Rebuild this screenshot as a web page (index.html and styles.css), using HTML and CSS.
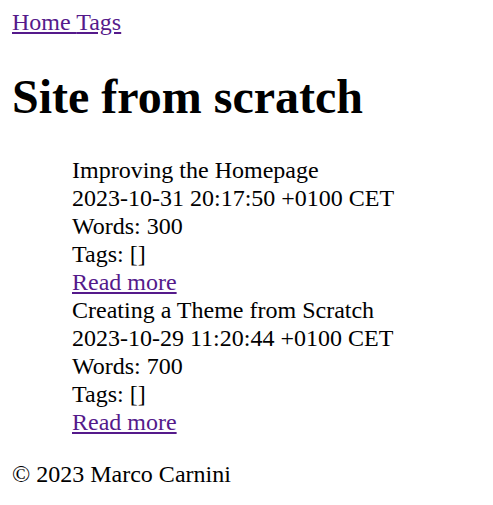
FILE: index.html
```html
<!DOCTYPE html>
<html lang="en">
<head>
<meta charset="utf-8">
<title>Site from scratch</title>
<link rel="stylesheet" href="styles.css">
</head>
<body>
<nav class="nav"><a href="#">Home </a><a href="#">Tags</a></nav>
<h1 class="title">Site from scratch</h1>
<ul class="posts">
  <li class="post">
    <div>Improving the Homepage</div>
    <div>2023-10-31 20:17:50 +0100 CET</div>
    <div>Words: 300</div>
    <div>Tags: []</div>
    <a href="#">Read more</a>
  </li>
  <li class="post">
    <div>Creating a Theme from Scratch</div>
    <div>2023-10-29 11:20:44 +0100 CET</div>
    <div>Words: 700</div>
    <div>Tags: []</div>
    <a href="#">Read more</a>
  </li>
</ul>
<footer class="footer"><p>© 2023 Marco Carnini</p></footer>
</body>
</html>
```
FILE: styles.css
```css
body {
  margin: 8px 12px 12px;
  font-family: "Liberation Serif", "Times New Roman", serif;
  font-size: 24px;
  line-height: 28px;
  color: #000;
  background: #fff;
}
a { color: #551a8b; }
.title {
  font-size: 48px;
  line-height: normal;
  font-weight: bold;
  margin: 33px 0 32px;
}
.posts {
  list-style: none;
  margin: 24px 0;
  padding-left: 60px;
}
.footer p { margin: 24px 0; }
```
